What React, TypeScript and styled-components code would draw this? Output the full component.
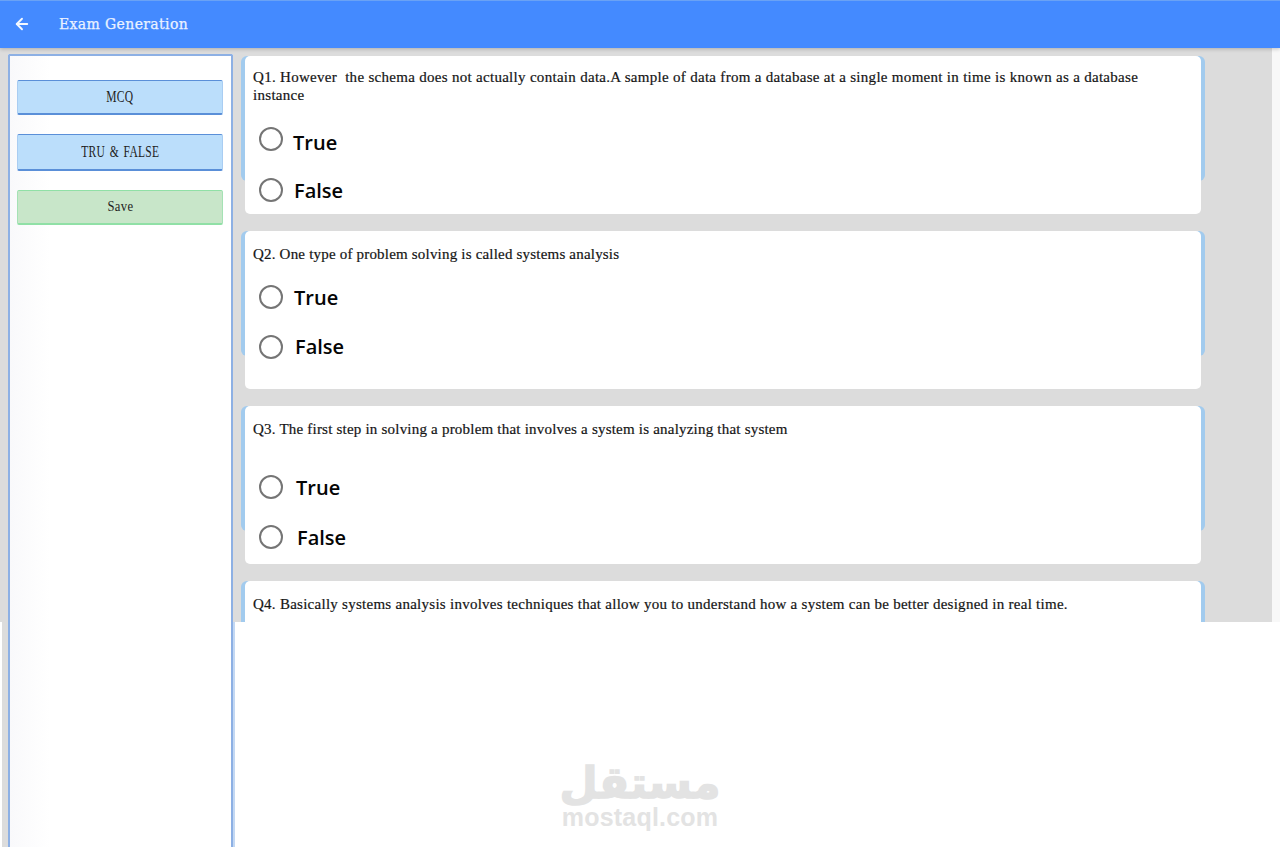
import React from "react";
import styled, { createGlobalStyle } from "styled-components";
import { ArrowLeft } from "lucide-react";

const Global = createGlobalStyle`
  html, body { margin: 0; padding: 0; background: #fff; overflow: hidden; }
  * { box-sizing: border-box; }
`;
const Page = styled.div`
  position: relative; width: 1280px; height: 847px; display: flex; flex-direction: column; overflow: hidden;
`;
const Header = styled.header`
  position: relative; z-index: 2; flex: 0 0 48px; display: flex; align-items: center;
  padding: 0 0 1px 13px; background: #448aff; border-top: 1px solid #6aa2f5; box-shadow: 0 1px 4px rgba(0,0,0,.22);
`;
const BackIcon = styled(ArrowLeft)`color: #f4f8ff; flex: none;`;
const Title = styled.h1`
  margin: 0 0 0 28px; font: 400 14px/20px "DejaVu Serif", serif; letter-spacing: .37px; color: #eaf2ff;
  -webkit-text-stroke: .25px #eaf2ff;
`;
const Shell = styled.div`flex: 1; display: flex; min-height: 0;`;
const Gutter = styled.div`flex: 0 0 8px; display: flex; flex-direction: column;`;
const GutterTop = styled.div`flex: 0 0 574px; background: #dcdcdc;`;
const GutterBottom = styled.div`flex: 1; margin-left: 2px; background: #dcdcdc;`;
const SideWrap = styled.div`flex: 0 0 225px; padding-top: 6px; background: linear-gradient(#dcdcdc 6px, transparent 6px);`;
const Sidebar = styled.aside`
  height: 100%; display: flex; flex-direction: column; gap: 19px; padding: 24px 8px 0 7px;
  border: 2px solid #8db0e4; border-bottom: 0; border-radius: 2px 2px 0 0;
  background: linear-gradient(90deg, #f9f9fb 0, #fff 40px);
`;
const SideButton = styled.button<{ $tone: "blue" | "green"; $h: number }>`
  height: ${p => p.$h}px; padding: 0 0 1px; border-radius: 2px; color: #222;
  background: ${p => (p.$tone === "blue" ? "#bbdefb" : "#c8e6c9")};
  border: 1px solid ${p => (p.$tone === "blue" ? "#a9cdf2" : "#a5e2b5")};
  border-bottom: 2px solid ${p => (p.$tone === "blue" ? "#5a8fd8" : "#90e0a6")};
  border-top-color: ${p => (p.$tone === "blue" ? "#5a8fd8" : "#90e0a6")};
`;
const ButtonLabel = styled.span<{ $size: number; $squeeze: number }>`
  display: inline-block; font: 400 ${p => p.$size}px "Liberation Serif", serif; letter-spacing: .4px; word-spacing: 2px;
  white-space: pre; transform: scaleX(${p => p.$squeeze});
`;
const MainColumn = styled.div`flex: 1; display: flex; flex-direction: column; min-width: 0;`;
const Viewport = styled.div`flex: 0 0 574px; display: flex; overflow: hidden; isolation: isolate; background: #dcdcdc;`;
const Scroller = styled.main`
  flex: 1; display: flex; flex-direction: column; gap: 17px; padding: 8px 0 0 12px; min-width: 0;
`;
const Track = styled.div`flex: 0 0 8px; background: #f8f8f8;`;
const Below = styled.div`flex: 1; border-left: 2px solid #c3d8f3;`;
const Card = styled.section<{ $pad: number }>`
  position: relative; flex: 0 0 158px; width: 956px; background: #fff; border-radius: 5px;
  padding: ${p => p.$pad}px 48px 0 8px;
  &::before {
    content: ""; position: absolute; z-index: -1; left: -4px; right: -4px; top: 0; height: 125px;
    border-radius: 6px; background: #a2cbee;
  }
`;
const Question = styled.p<{ $track: number }>`
  margin: 0; font: 400 15px/18px "Liberation Serif", serif; letter-spacing: ${p => p.$track}px; color: #151515;
  -webkit-text-stroke: .2px #151515;
`;
const Options = styled.div<{ $top: number; $gap: number }>`
  margin-top: ${p => p.$top}px; display: flex; flex-direction: column; gap: ${p => p.$gap}px; padding-left: 6px;
`;
const Option = styled.label<{ $gap: number }>`
  display: flex; align-items: center; height: 25px; gap: ${p => p.$gap}px;
`;
const OptionText = styled.span<{ $drop: number }>`
  padding-top: ${p => p.$drop}px;
  font: 600 20px/25px "Open Sans", "Noto Sans", sans-serif; color: #050505;
`;
const Radio = styled.span`
  width: 24px; height: 24px; flex: none; border: 2.5px solid #757575; border-radius: 50%; background: #fff;
`;
const Watermark = styled.div`
  position: absolute; left: 540px; top: 760px; width: 200px; text-align: center; color: #e3e3e3;
`;
const WatermarkArabic = styled.div`
  font: 700 44px/46px "DejaVu Sans", sans-serif; height: 46px; -webkit-text-stroke: 1.5px #e3e3e3;
`;
const WatermarkLatin = styled.div`
  font: 700 25px/22px "Liberation Sans", sans-serif; letter-spacing: .2px;
`;

type Q = { text: string; pad: number; track: number; top: number; gap: number; t: number; f: number; td: number; fd: number };
const questions: Q[] = [
  { text: "Q1. However\u00a0 the schema does not actually contain data.A sample of data from a database at a single moment in time is known as a database instance", pad: 12, track: 0.295, top: 22, gap: 26, t: 10, f: 11, td: 7, fd: 2 },
  { text: "Q2. One type of problem solving is called systems analysis", pad: 14, track: 0.195, top: 21, gap: 25, t: 11, f: 12, td: 2, fd: 0 },
  { text: "Q3. The first step in solving a problem that involves a system is analyzing that system", pad: 14, track: 0.21, top: 36, gap: 25, t: 13, f: 14, td: 2, fd: 2 },
];

export default function App() {
  return (
    <Page>
      <Global />
      <Header>
        <BackIcon size={18} strokeWidth={2.5} />
        <Title>Exam Generation</Title>
      </Header>
      <Shell>
        <Gutter><GutterTop /><GutterBottom /></Gutter>
        <SideWrap>
          <Sidebar>
            <SideButton $tone="blue" $h={35}><ButtonLabel $size={16} $squeeze={0.72}>MCQ</ButtonLabel></SideButton>
            <SideButton $tone="blue" $h={37}><ButtonLabel $size={16} $squeeze={0.72}>{"TRU & FALSE"}</ButtonLabel></SideButton>
            <SideButton $tone="green" $h={35}><ButtonLabel $size={14} $squeeze={0.9}>Save</ButtonLabel></SideButton>
          </Sidebar>
        </SideWrap>
        <MainColumn>
          <Viewport>
            <Scroller>
              {questions.map(q => (
                <Card key={q.text} $pad={q.pad}>
                  <Question $track={q.track}>{q.text}</Question>
                  <Options $top={q.top} $gap={q.gap}>
                    <Option $gap={q.t}><Radio /><OptionText $drop={q.td}>True</OptionText></Option>
                    <Option $gap={q.f}><Radio /><OptionText $drop={q.fd}>False</OptionText></Option>
                  </Options>
                </Card>
              ))}
              <Card $pad={14}>
                <Question $track={0.265}>Q4. Basically systems analysis involves techniques that allow you to understand how a system can be better designed in real time.</Question>
              </Card>
            </Scroller>
            <Track />
          </Viewport>
          <Below />
        </MainColumn>
      </Shell>
      <Watermark>
        <WatermarkArabic>مستقل</WatermarkArabic>
        <WatermarkLatin>mostaql.com</WatermarkLatin>
      </Watermark>
    </Page>
  );
}
